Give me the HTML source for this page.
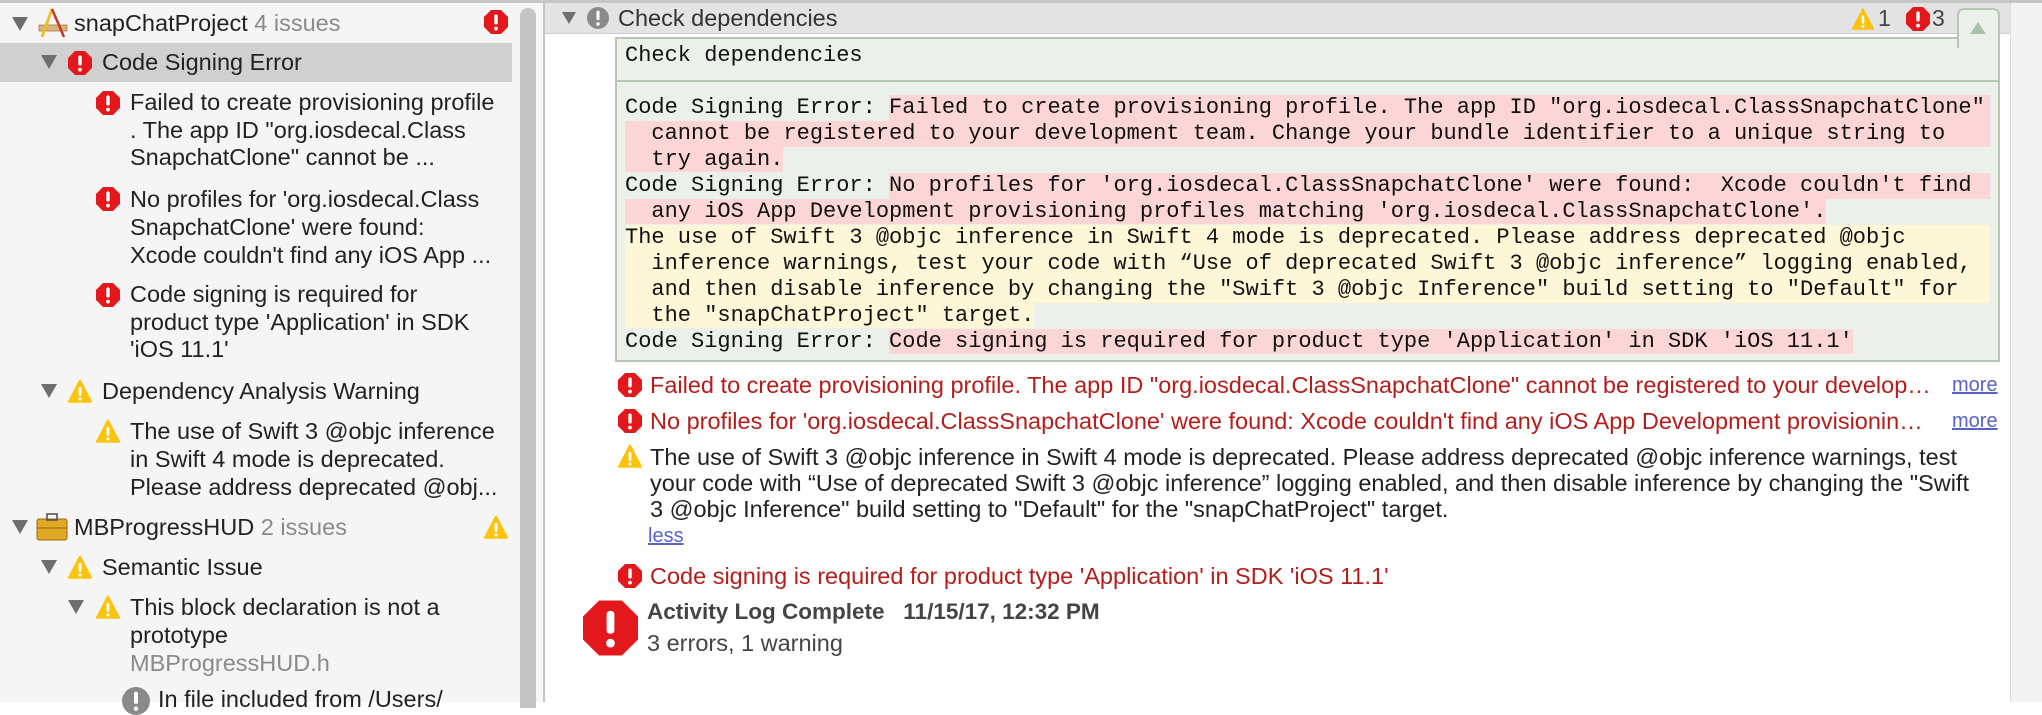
<!DOCTYPE html>
<html><head><meta charset="utf-8">
<style>
*{margin:0;padding:0;box-sizing:border-box}
body{width:2042px;height:702px;overflow:hidden;background:#fff;font-family:"Liberation Sans",Arial,sans-serif;position:relative}
.a{position:absolute;white-space:nowrap}
.sb{font-size:23.5px;color:#222;line-height:28px}
.tri{position:absolute;width:0;height:0;border-left:8px solid transparent;border-right:8px solid transparent;border-top:14px solid #6e6e6e}
.mono{font-family:"Liberation Mono",monospace;font-size:22px;line-height:26px;color:#111;white-space:pre}
.pk{background:#fcd6d6}
.yl{background:#fdf7d8}
.ln{position:absolute;left:625px;height:26px}
.msg{font-size:23.5px;line-height:26px;color:#b51d1a}
.more{color:#5563c9;text-decoration:underline;font-size:20px}
</style></head><body>
<svg width="0" height="0" style="position:absolute">
<defs>
<symbol id="err" viewBox="0 0 24 24"><polygon points="7,0 17,0 24,7 24,17 17,24 7,24 0,17 0,7" fill="#e2181c"/><rect x="10.3" y="4.5" width="3.4" height="10" rx="1.5" fill="#fff"/><circle cx="12" cy="18.6" r="1.9" fill="#fff"/></symbol>
<symbol id="warn" viewBox="0 0 24 24"><path d="M12 1 L23.5 23 L0.5 23 Z" fill="#fdc20a" stroke="#fdc20a" stroke-linejoin="round" stroke-width="1.5"/><rect x="10.6" y="8" width="2.8" height="9" rx="1.2" fill="#fff"/><circle cx="12" cy="20" r="1.6" fill="#fff"/></symbol>
<symbol id="gi" viewBox="0 0 24 24"><circle cx="12" cy="12" r="12" fill="#8a8a8a"/><rect x="10.3" y="4" width="3.4" height="10.5" rx="1.5" fill="#fff"/><circle cx="12" cy="18.6" r="1.9" fill="#fff"/></symbol>
</defs></svg>

<div class="a" style="left:0;top:0;width:2042px;height:3px;background:#c6c6c6"></div>

<div class="a" style="left:0;top:3px;width:536px;height:699px;background:#f5f5f5"></div>
<div class="a" style="left:0;top:43px;width:512px;height:39px;background:#d0d0d0"></div>
<div class="a" style="left:520px;top:8px;width:16px;height:700px;background:#c3c3c3;border-radius:8px 8px 0 0"></div>
<div class="a" style="left:536px;top:3px;width:7px;height:699px;background:#f7f7f7"></div>
<div class="a" style="left:543px;top:3px;width:2px;height:699px;background:#c4c4c4"></div>

<div class="tri" style="left:12px;top:17px"></div>
<svg class="a" style="left:38px;top:8px" width="30" height="30" viewBox="0 0 30 30"><rect x="1" y="17" width="28" height="6" fill="#d9b27a" stroke="#a67c44" stroke-width="0.8"/><line x1="14" y1="1" x2="4" y2="29" stroke="#e7c22a" stroke-width="3"/><line x1="14" y1="1" x2="26" y2="29" stroke="#c0392b" stroke-width="2.5"/></svg>
<div class="a sb" style="left:74px;top:9px">snapChatProject <span style="color:#8a8a8a">4 issues</span></div>
<svg class="a" style="left:484px;top:10px" width="24" height="24"><use href="#err"/></svg>

<div class="tri" style="left:41px;top:55px"></div>
<svg class="a" style="left:68px;top:51px" width="24" height="24"><use href="#err"/></svg>
<div class="a sb" style="left:102px;top:48px">Code Signing Error</div>

<svg class="a" style="left:96px;top:91px" width="24" height="24"><use href="#err"/></svg>
<div class="a sb" style="left:130px;top:89px;line-height:27.5px">Failed to create provisioning profile<br>. The app ID "org.iosdecal.Class<br>SnapchatClone" cannot be ...</div>
<svg class="a" style="left:96px;top:187px" width="24" height="24"><use href="#err"/></svg>
<div class="a sb" style="left:130px;top:185px;line-height:28px">No profiles for 'org.iosdecal.Class<br>SnapchatClone' were found:<br>Xcode couldn't find any iOS App ...</div>
<svg class="a" style="left:96px;top:283px" width="24" height="24"><use href="#err"/></svg>
<div class="a sb" style="left:130px;top:281px;line-height:27.5px">Code signing is required for<br>product type 'Application' in SDK<br>'iOS 11.1'</div>

<div class="tri" style="left:41px;top:384px"></div>
<svg class="a" style="left:68px;top:379px" width="24" height="24"><use href="#warn"/></svg>
<div class="a sb" style="left:102px;top:377px">Dependency Analysis Warning</div>
<svg class="a" style="left:96px;top:419px" width="24" height="24"><use href="#warn"/></svg>
<div class="a sb" style="left:130px;top:417px;line-height:28px">The use of Swift 3 @objc inference<br>in Swift 4 mode is deprecated.<br>Please address deprecated @obj...</div>

<div class="tri" style="left:12px;top:520px"></div>
<svg class="a" style="left:36px;top:513px" width="32" height="28" viewBox="0 0 32 28"><rect x="1" y="6" width="30" height="21" rx="2" fill="#e0a825" stroke="#9a6d10"/><rect x="11" y="1" width="10" height="6" fill="none" stroke="#555" stroke-width="1.6"/><line x1="1" y1="15" x2="31" y2="15" stroke="#9a6d10"/></svg>
<div class="a sb" style="left:74px;top:513px">MBProgressHUD <span style="color:#8a8a8a">2 issues</span></div>
<svg class="a" style="left:484px;top:515px" width="24" height="24"><use href="#warn"/></svg>

<div class="tri" style="left:41px;top:560px"></div>
<svg class="a" style="left:68px;top:555px" width="24" height="24"><use href="#warn"/></svg>
<div class="a sb" style="left:102px;top:553px">Semantic Issue</div>

<div class="tri" style="left:68px;top:600px"></div>
<svg class="a" style="left:96px;top:595px" width="24" height="24"><use href="#warn"/></svg>
<div class="a sb" style="left:130px;top:593px;line-height:28px">This block declaration is not a<br>prototype<br><span style="color:#8a8a8a">MBProgressHUD.h</span></div>
<svg class="a" style="left:122px;top:687px" width="28" height="28"><use href="#gi"/></svg>
<div class="a sb" style="left:158px;top:685px">In file included from /Users/</div>

<div class="a" style="left:545px;top:3px;width:1465px;height:31px;background:#e3e3e3;border-bottom:1px solid #cfcfcf"></div>
<div class="tri" style="left:562px;top:12px;border-left-width:7px;border-right-width:7px;border-top-width:12px"></div>
<svg class="a" style="left:587px;top:7px" width="22" height="22"><use href="#gi"/></svg>
<div class="a" style="left:618px;top:4px;font-size:23.5px;color:#333;line-height:28px">Check dependencies</div>
<svg class="a" style="left:1851px;top:8px" width="24" height="22"><use href="#warn"/></svg>
<div class="a" style="left:1878px;top:4px;font-size:23px;color:#444;line-height:28px">1</div>
<svg class="a" style="left:1906px;top:7px" width="24" height="24"><use href="#err"/></svg>
<div class="a" style="left:1932px;top:4px;font-size:23px;color:#444;line-height:28px">3</div>
<div class="a" style="left:2010px;top:3px;width:32px;height:699px;background:#f3f3f3;border-left:1px solid #dcdcdc"></div>

<div class="a" style="left:615px;top:37px;width:1385px;height:325px;background:#ebf0ea;border:2px solid #b7c7b4"></div>
<div class="a" style="left:1957px;top:8px;width:43px;height:40px;background:#ebf0ea;border:2px solid #b7c7b4;border-bottom:none;border-radius:7px 7px 0 0"></div>
<div class="a" style="left:1970px;top:22px;width:0;height:0;border-left:8px solid transparent;border-right:8px solid transparent;border-bottom:12px solid #a9bfa7"></div>
<div class="a" style="left:617px;top:80px;width:1381px;height:2px;background:#b7c7b4"></div>
<div class="a mono" style="left:625px;top:43px">Check dependencies</div>

<div class="ln mono" style="top:95px;display:flex;width:1365px"><span>Code Signing Error: </span><span class="pk" style="flex:1">Failed to create provisioning profile. The app ID "org.iosdecal.ClassSnapchatClone"</span></div>
<div class="ln mono pk" style="top:121px;width:1365px">  cannot be registered to your development team. Change your bundle identifier to a unique string to</div>
<div class="ln mono" style="top:147px"><span class="pk">  try again.</span></div>
<div class="ln mono" style="top:173px;display:flex;width:1365px"><span>Code Signing Error: </span><span class="pk" style="flex:1">No profiles for 'org.iosdecal.ClassSnapchatClone' were found:  Xcode couldn't find</span></div>
<div class="ln mono" style="top:199px"><span class="pk">  any iOS App Development provisioning profiles matching 'org.iosdecal.ClassSnapchatClone'.</span></div>
<div class="ln mono yl" style="top:225px;width:1365px">The use of Swift 3 @objc inference in Swift 4 mode is deprecated. Please address deprecated @objc</div>
<div class="ln mono yl" style="top:251px;width:1365px">  inference warnings, test your code with “Use of deprecated Swift 3 @objc inference” logging enabled,</div>
<div class="ln mono yl" style="top:277px;width:1365px">  and then disable inference by changing the "Swift 3 @objc Inference" build setting to "Default" for</div>
<div class="ln mono" style="top:303px"><span class="yl">  the "snapChatProject" target.</span></div>
<div class="ln mono" style="top:329px"><span>Code Signing Error: </span><span class="pk">Code signing is required for product type 'Application' in SDK 'iOS 11.1'</span></div>

<svg class="a" style="left:618px;top:373px" width="24" height="24"><use href="#err"/></svg>
<div class="a msg" style="left:650px;top:372px;width:1282px;overflow:hidden;text-overflow:ellipsis">Failed to create provisioning profile. The app ID "org.iosdecal.ClassSnapchatClone" cannot be registered to your development team. Change your bundle identifier</div>
<div class="a more" style="left:1952px;top:374px">more</div>
<svg class="a" style="left:618px;top:409px" width="24" height="24"><use href="#err"/></svg>
<div class="a msg" style="left:650px;top:408px;width:1282px;overflow:hidden;text-overflow:ellipsis">No profiles for 'org.iosdecal.ClassSnapchatClone' were found:  Xcode couldn't find any iOS App Development provisioning profiles matching</div>
<div class="a more" style="left:1952px;top:410px">more</div>
<svg class="a" style="left:618px;top:444px" width="24" height="24"><use href="#warn"/></svg>
<div class="a msg" style="left:650px;top:444px;color:#222">The use of Swift 3 @objc inference in Swift 4 mode is deprecated. Please address deprecated @objc inference warnings, test<br>your code with “Use of deprecated Swift 3 @objc inference” logging enabled, and then disable inference by changing the "Swift<br>3 @objc Inference" build setting to "Default" for the "snapChatProject" target.</div>
<div class="a more" style="left:648px;top:525px">less</div>
<svg class="a" style="left:618px;top:564px" width="24" height="24"><use href="#err"/></svg>
<div class="a msg" style="left:650px;top:563px">Code signing is required for product type 'Application' in SDK 'iOS 11.1'</div>

<svg class="a" style="left:583px;top:600px" width="55" height="56"><use href="#err"/></svg>
<div class="a" style="left:647px;top:598px;font-size:22.5px;font-weight:bold;color:#444;line-height:28px">Activity Log Complete &nbsp;&nbsp;11/15/17, 12:32 PM</div>
<div class="a" style="left:647px;top:630px;font-size:23.5px;color:#444;line-height:26px">3 errors, 1 warning</div>
</body></html>
